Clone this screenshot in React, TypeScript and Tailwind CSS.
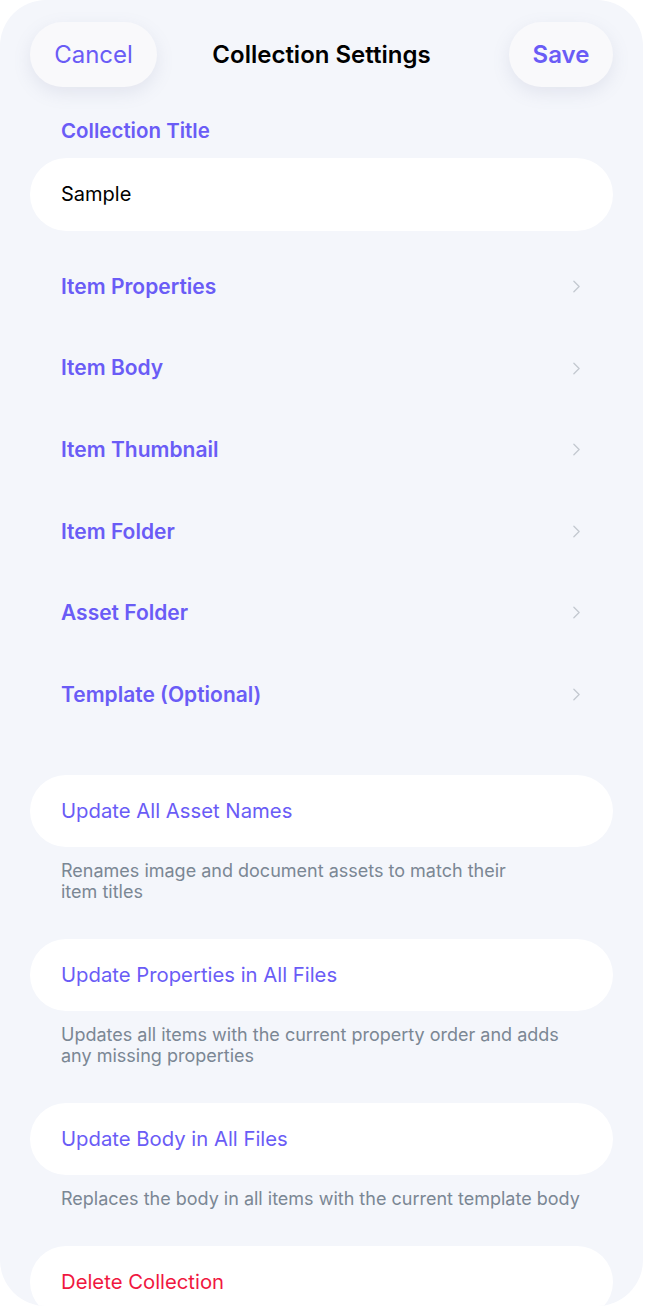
import { ChevronRight } from "lucide-react";

const NAV_ROWS = [
  "Item Properties",
  "Item Body",
  "Item Thumbnail",
  "Item Folder",
  "Asset Folder",
  "Template (Optional)",
];

const ACTIONS = [
  {
    label: "Update All Asset Names",
    note: "Renames image and document assets to match their\nitem titles",
  },
  {
    label: "Update Properties in All Files",
    note: "Updates all items with the current property order and adds\nany missing properties",
  },
  {
    label: "Update Body in All Files",
    note: "Replaces the body in all items with the current template body",
  },
];

export default function App() {
  return (
    <div className="min-h-[1311px] bg-white" style={{ fontFamily: "Inter, 'Noto Sans', sans-serif" }}>
      <div className="w-[643px] h-[1306px] overflow-hidden rounded-[46px] bg-[#f4f6fb]">
        {/* Header */}
        <div className="grid grid-cols-[1fr_auto_1fr] items-center px-[30px] pt-[22px]">
          <button className="h-[65px] w-[127px] justify-self-start rounded-full bg-[#f9f9fb] text-[24px] text-[#6a5cf6] shadow-[0_6px_18px_rgba(120,130,160,0.14)]">
            Cancel
          </button>
          <h1 className="text-[24px] font-semibold text-black">Collection Settings</h1>
          <button className="h-[65px] w-[104px] justify-self-end rounded-full bg-[#f9f9fb] text-[24px] font-semibold text-[#6a5cf6] shadow-[0_6px_18px_rgba(120,130,160,0.14)]">
            Save
          </button>
        </div>

        {/* Title field */}
        <div className="px-[30px]">
          <p className="mt-[29px] pl-[31px] text-[20.5px] font-semibold text-[#6a5cf6]">Collection Title</p>
          <div className="mt-[11px] flex h-[73px] items-center rounded-full bg-white pl-[31px] text-[20px] text-black">
            Sample
          </div>
        </div>

        {/* Navigation rows */}
        <div className="mt-[15px] flex flex-col px-[30px]">
          {NAV_ROWS.map((row) => (
            <div key={row} className="flex h-[81.6px] items-center justify-between pl-[31px] pr-[26px]">
              <span className="text-[21px] font-semibold text-[#6a5cf6]">{row}</span>
              <ChevronRight className="h-[21px] w-[21px] text-[#c3c8d0]" strokeWidth={1.5} />
            </div>
          ))}
        </div>

        {/* Actions */}
        <div className="mt-[40px] flex flex-col px-[30px]">
          {ACTIONS.map((a) => (
            <div key={a.label} className="mb-[37px]">
              <div className="flex h-[72px] items-center rounded-full bg-white pl-[31px] text-[20.3px] text-[#6a5cf6]">
                {a.label}
              </div>
              <p className="mt-[13px] whitespace-pre-line pl-[31px] text-[18px] leading-[21px] text-[#7b8794]">
                {a.note}
              </p>
            </div>
          ))}
          <div className="flex h-[72px] items-center rounded-full bg-white pl-[31px] text-[20.3px] text-[#f0173f]">
            Delete Collection
          </div>
        </div>
      </div>
    </div>
  );
}
